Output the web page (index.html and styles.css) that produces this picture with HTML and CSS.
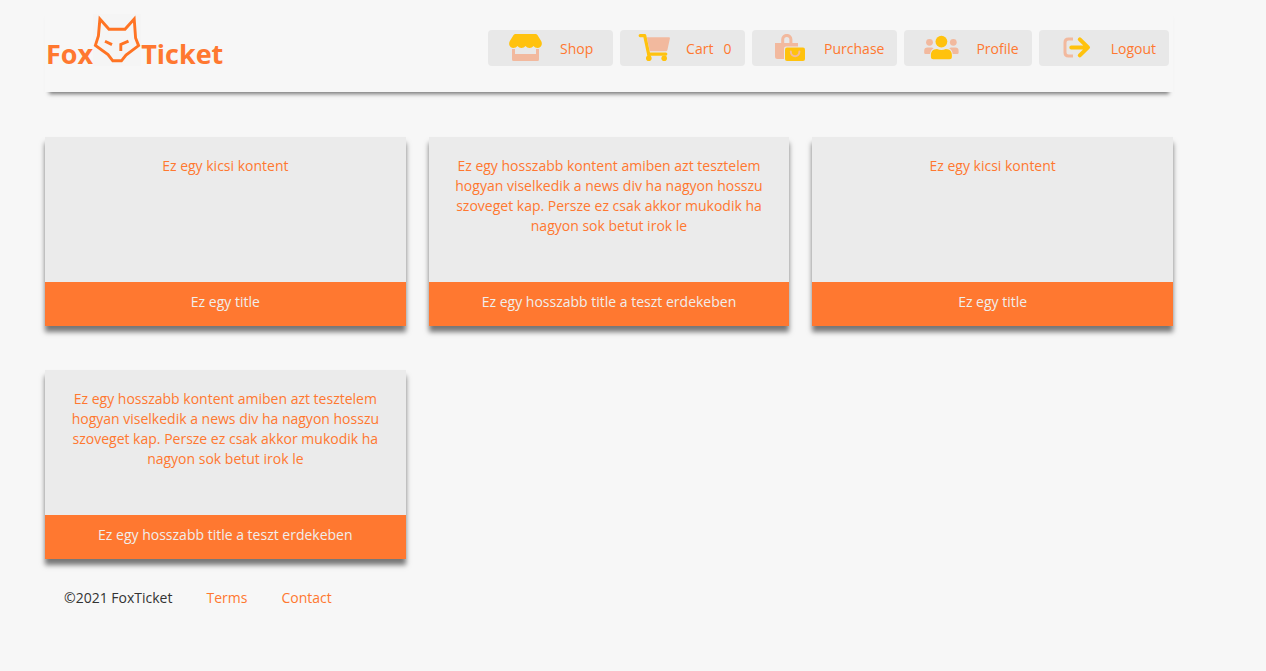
FILE: index.html
```html
<!DOCTYPE html>
<html lang="hu">
<head>
<meta charset="utf-8">
<title>FoxTicket</title>
<link rel="stylesheet" href="styles.css">
</head>
<body>
<div class="page">
  <header class="header">
    <a class="logo" href="#">
      <span>Fox</span>
      <svg class="logo-mark" viewBox="0 0 48 52" aria-hidden="true">
        <rect width="48" height="52" fill="#f5f5f5"/>
        <g fill="none" stroke="#ff7424" stroke-width="2.9">
          <path d="M6.900 5 16 15.200h16L41.200 5l1.400 19 3 7.600L33 41l-4.600 5.800h-8.600L15 40.600 2.400 31.400l3-9.400z"/>
          <path d="m12 27.300 7 3.300M35.500 27.200 27.800 30.500v6.600"/>
        </g>
      </svg>
      <span>Ticket</span>
    </a>
    <nav class="nav">
      <a class="nav-item" href="#">
        <svg class="icon" viewBox="0 0 36 27" aria-hidden="true">
          <path class="soft" d="M4 15h3v5h21v-5h3v10.500q0 1.500-1.500 1.500h-24q-1.500 0-1.500-1.500z"/>
          <path class="strong" d="M7.500 0h20q1.200 0 1.900 1l3.600 5.800c2 3.300.3 6.900-3.300 7.200-1.800 0-3.200-.6-4.200-1.900-1.900 2.500-6 2.500-8 0-2 2.500-6.100 2.500-8 0-1 1.300-2.400 1.900-4.200 1.900C1.700 13.700 0 10.100 2 6.800L5.600 1q.7-1 1.900-1z"/>
        </svg>
        <span>Shop</span>
      </a>
      <a class="nav-item nav-item-cart" href="#">
        <svg class="icon icon-cart" viewBox="0 0 32 27" aria-hidden="true">
          <path class="soft" d="M8.800 3.300H31q1.200 0 .9 1.200l-2.500 11.600q-.3 1.200-1.500 1.200H11.800z"/>
          <path class="line-strong" d="M2.200 1.600h4.500l4.700 22"/>
          <path class="line-strong" d="M10.800 20.100h17"/>
          <circle class="strong" cx="10.800" cy="24.200" r="2.800"/>
          <circle class="strong" cx="26.200" cy="24.200" r="2.800"/>
        </svg>
        <span>Cart</span>
        <span class="count">0</span>
      </a>
      <a class="nav-item" href="#">
        <svg class="icon" viewBox="0 0 36 27" aria-hidden="true">
          <path class="soft" d="M3 9h23v3.400H14q-2 0-2 2V25H5.500Q3 25 3 22.500z"/>
          <path class="line-soft" d="M10.700 11V5.500a4.100 4.100 0 0 1 8.200 0V11"/>
          <rect class="strong" x="13" y="13.500" width="20" height="13.500" rx="2"/>
          <path class="smile" d="M18.800 17.500c0 6.300 8.600 6.300 8.600 0"/>
        </svg>
        <span>Purchase</span>
      </a>
      <a class="nav-item" href="#">
        <svg class="icon" viewBox="0 0 36 27" aria-hidden="true">
          <circle class="soft" cx="5.500" cy="8.300" r="3.400"/>
          <circle class="soft" cx="29.300" cy="8.300" r="3.400"/>
          <path class="soft" d="M3.500 13.500h4q1.200 0 2.100.8-3 1.600-3.500 5.700H1.500Q.2 20 .2 18.700v-1.900q0-3.300 3.300-3.300zM31.300 13.500h-4q-1.200 0-2.100.8 3 1.600 3.500 5.700h4.600q1.300 0 1.300-1.300v-1.900q0-3.300-3.300-3.300z"/>
          <circle class="strong" cx="17.400" cy="7.600" r="5.900"/>
          <path class="strong" d="M13 15q4.400 1.900 8.800 0c4.200 0 6.100 2.800 6.100 6.200v1.600q0 2.500-2.500 2.500h-16q-2.500 0-2.500-2.500v-1.600C6.900 17.800 8.800 15 13 15z"/>
        </svg>
        <span>Profile</span>
      </a>
      <a class="nav-item" href="#">
        <svg class="icon" viewBox="0 0 36 27" aria-hidden="true">
          <path class="line-soft" d="M14 5H9.500Q6 5 6 8.500v10Q6 22 9.500 22H14"/>
          <path class="line-strong thick" d="M12.300 13.400h16M20.800 5.400l8.200 8-8.200 8"/>
        </svg>
        <span>Logout</span>
      </a>
    </nav>
  </header>

  <main class="news">
    <article class="card">
      <p class="card-text">Ez egy kicsi kontent</p>
      <h2 class="card-title">Ez egy title</h2>
    </article>
    <article class="card">
      <p class="card-text">Ez egy hosszabb kontent amiben azt tesztelem hogyan viselkedik a news div ha nagyon hosszu szoveget kap. Persze ez csak akkor mukodik ha nagyon sok betut irok le</p>
      <h2 class="card-title">Ez egy hosszabb title a teszt erdekeben</h2>
    </article>
    <article class="card">
      <p class="card-text">Ez egy kicsi kontent</p>
      <h2 class="card-title">Ez egy title</h2>
    </article>
    <article class="card">
      <p class="card-text">Ez egy hosszabb kontent amiben azt tesztelem hogyan viselkedik a news div ha nagyon hosszu szoveget kap. Persze ez csak akkor mukodik ha nagyon sok betut irok le</p>
      <h2 class="card-title">Ez egy hosszabb title a teszt erdekeben</h2>
    </article>
  </main>

  <footer class="footer">
    <span>©2021 FoxTicket</span>
    <a href="#">Terms</a>
    <a href="#">Contact</a>
  </footer>
</div>
</body>
</html>
```
FILE: styles.css
```css
* {
  box-sizing: border-box;
}

body {
  margin: 0;
  background: #f7f7f7;
  color: #333;
  font: 14px/20px "Open Sans", "Noto Sans", sans-serif;
}

a {
  color: #ff7830;
  text-decoration: none;
}

.page {
  padding: 8px 93px 60px 45px;
}

.header {
  display: flex;
  justify-content: space-between;
  align-items: flex-start;
  min-height: 84px;
  padding: 6px 4px 0 1px;
  box-shadow: 0 6px 4px -4px #777;
  background: #f7f7f7;
}

.logo {
  display: flex;
  align-items: flex-end;
  font-size: 27px;
  line-height: 24px;
  font-weight: 700;
}

.logo-mark {
  width: 48px;
  height: 52px;
}

.nav {
  display: flex;
  gap: 7px;
  padding-top: 16px;
}

.nav-item {
  display: flex;
  align-items: center;
  min-width: 125px;
  height: 36px;
  padding: 1px 13px 0 20px;
  border-radius: 4px;
  background: #e8e8e8;
}

.nav-item-cart {
  padding-left: 18px;
}

.icon {
  width: 36px;
  height: 27px;
  margin: 0 16px 2px 0;
}

.icon-cart {
  width: 32px;
}

.count {
  margin-left: 10px;
}

.soft {
  fill: #f2b99e;
}

.strong {
  fill: #ffc20e;
}

.line-soft {
  fill: none;
  stroke: #f2b99e;
  stroke-width: 3;
}

.line-strong {
  fill: none;
  stroke: #ffc20e;
  stroke-width: 3.2;
  stroke-linecap: round;
  stroke-linejoin: round;
}

.thick {
  stroke-width: 4;
}

.smile {
  fill: none;
  stroke: #f2b99e;
  stroke-width: 2;
  stroke-linecap: round;
}

.news {
  display: grid;
  grid-template-columns: repeat(3, 1fr);
  gap: 44px 23px;
  padding-top: 45px;
}

.card {
  display: flex;
  flex-direction: column;
  box-shadow: 0 6px 5px #777;
  background: #ebebeb;
  text-align: center;
}

.card-text {
  flex: 1;
  min-height: 145px;
  margin: 0;
  padding: 19px 24px;
  color: #ff7830;
}

.card-title {
  margin: 0;
  padding: 10px 24px 14px;
  background: #ff7830;
  color: #f0eeec;
  font-size: 14px;
  line-height: 20px;
  font-weight: 400;
}

.footer {
  display: flex;
  gap: 34px;
  padding: 29px 19px 0;
}
```
